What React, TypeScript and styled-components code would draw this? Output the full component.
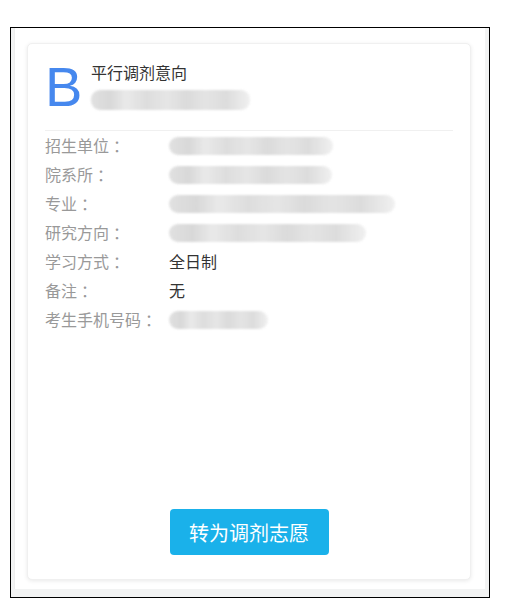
import React from "react";
import styled, { createGlobalStyle } from "styled-components";

const Global = createGlobalStyle`
  html, body { margin: 0; padding: 0; background: #fff; }
  body { font-family: "Noto Sans CJK SC", "Liberation Sans", sans-serif; }
  * { box-sizing: border-box; }
`;

const Frame = styled.div`
  margin: 27px 0 0 10px;
  width: 480px;
  height: 571px;
  border: 1px solid #000;
  background: #f2f3f3;
  padding: 0 3px 0 3px;
`;

const Viewport = styled.div`
  height: 561px;
  background: #fff;
  border-left: 1px solid #ededed;
  border-right: 1px solid #f3f3f3;
  padding: 15px 0 0 12px;
`;

const Card = styled.div`
  width: 444px;
  height: 537px;
  background: #fff;
  border-radius: 5px;
  box-shadow: 0 1px 4px rgba(0, 0, 0, 0.09);
  border: 1px solid #f0f0f0;
  padding: 0 17px 24px 17px;
  display: flex;
  flex-direction: column;
`;

const Header = styled.div`
  display: flex;
  align-items: flex-start;
  gap: 8px;
  padding: 15px 0 0 0;
  height: 87px;
  border-bottom: 1px solid #f0f0f0;
`;

const Letter = styled.div`
  font-family: "Liberation Sans", Arial, sans-serif;
  font-size: 56px;
  line-height: 56px;
  color: #4688ee;
  width: 38px;
`;

const HeaderText = styled.div`
  display: flex;
  flex-direction: column;
  gap: 9px;
  padding-top: 4px;
`;

const Title = styled.div`
  font-size: 16px;
  line-height: 18px;
  color: #333;
`;

const Blur = styled.div<{ $w: number; $h?: number }>`
  width: ${(p) => p.$w}px;
  height: ${(p) => p.$h ?? 18}px;
  border-radius: 9px;
  filter: blur(1px);
  background: linear-gradient(
    90deg,
    #dcdcdc 0%,
    #d2d2d2 12%,
    #e6e6e6 22%,
    #d8d8d8 35%,
    #e2e2e2 48%,
    #d5d5d5 60%,
    #e0e0e0 72%,
    #d7d7d7 85%,
    #eeeeee 100%
  );
  opacity: 0.85;
`;

const Rows = styled.div`
  display: flex;
  flex-direction: column;
  padding-top: 0;
`;

const Row = styled.div`
  display: flex;
  align-items: center;
  height: 29px;
`;

const Label = styled.div`
  width: 124px;
  flex: none;
  font-size: 16px;
  color: #999;
  line-height: 29px;
`;

const Colon = styled.span`
  margin-left: 4px;
`;

const Value = styled.div`
  font-size: 16px;
  color: #333;
  line-height: 29px;
`;

const Spacer = styled.div`
  flex: 1;
`;

const Footer = styled.div`
  display: flex;
  justify-content: center;
`;

const Button = styled.button`
  width: 159px;
  height: 46px;
  border: none;
  border-radius: 4px;
  background: #1ab1ea;
  color: #fff;
  font-family: "Noto Sans CJK SC", sans-serif;
  font-size: 20px;
  cursor: pointer;
`;

type Item = { label: string; value?: string; blur?: number };

const items: Item[] = [
  { label: "招生单位", blur: 164 },
  { label: "院系所", blur: 163 },
  { label: "专业", blur: 226 },
  { label: "研究方向", blur: 197 },
  { label: "学习方式", value: "全日制" },
  { label: "备注", value: "无" },
  { label: "考生手机号码", blur: 99 },
];

export default function App() {
  return (
    <>
      <Global />
      <Frame>
        <Viewport>
          <Card>
            <Header>
              <Letter>B</Letter>
              <HeaderText>
                <Title>平行调剂意向</Title>
                <Blur $w={159} $h={20} />
              </HeaderText>
            </Header>
            <Rows>
              {items.map((it) => (
                <Row key={it.label}>
                  <Label>
                    {it.label}
                    <Colon>：</Colon>
                  </Label>
                  {it.value ? <Value>{it.value}</Value> : <Blur $w={it.blur ?? 100} />}
                </Row>
              ))}
            </Rows>
            <Spacer />
            <Footer>
              <Button>转为调剂志愿</Button>
            </Footer>
          </Card>
        </Viewport>
      </Frame>
    </>
  );
}
